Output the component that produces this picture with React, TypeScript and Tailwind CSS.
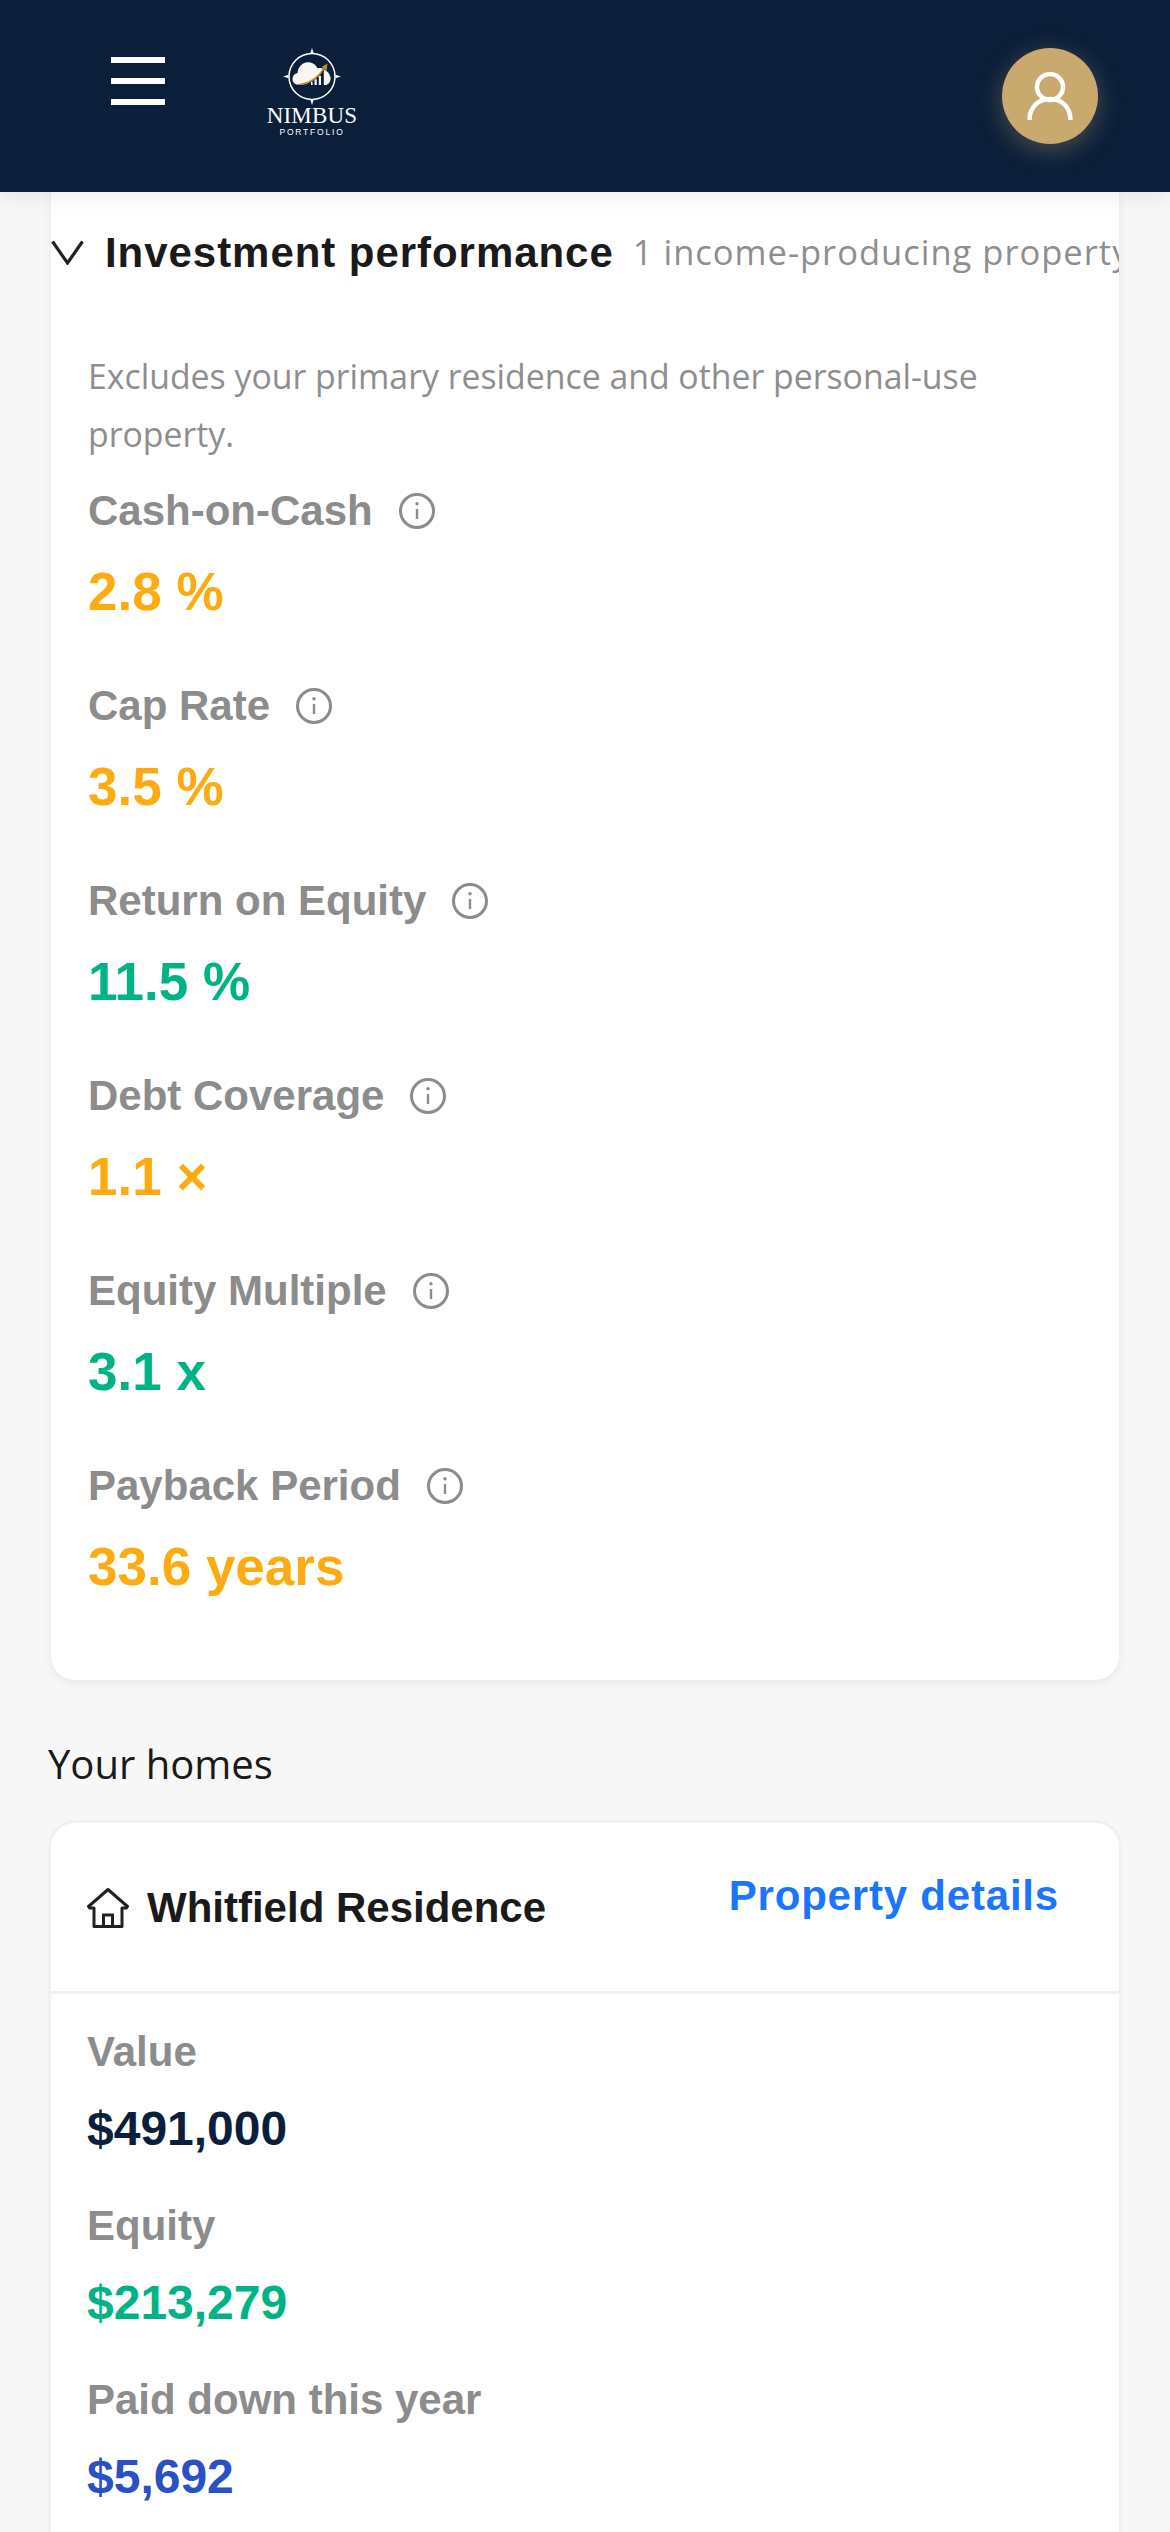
const sans = "font-['Liberation_Sans',Arial,sans-serif]";
const soft = "font-['Open_Sans',sans-serif]";

const metrics = [
  { label: "Cash-on-Cash", value: "2.8 %", color: "text-[#fdab10]" },
  { label: "Cap Rate", value: "3.5 %", color: "text-[#fdab10]" },
  { label: "Return on Equity", value: "11.5 %", color: "text-[#00b386]" },
  { label: "Debt Coverage", value: "1.1 ×", color: "text-[#fdab10]" },
  { label: "Equity Multiple", value: "3.1 x", color: "text-[#00b386]" },
  { label: "Payback Period", value: "33.6 years", color: "text-[#fdab10]" },
];

const homeStats = [
  { label: "Value", value: "$491,000", color: "text-[#0b1f3a]" },
  { label: "Equity", value: "$213,279", color: "text-[#00b386]" },
  { label: "Paid down this year", value: "$5,692", color: "text-[#2b4fc7]" },
];

function InfoIcon() {
  return (
    <svg width="36" height="36" viewBox="0 0 36 36" fill="none" stroke="#8c8c8c" strokeWidth="3" className="shrink-0">
      <circle cx="18" cy="18" r="16.5" />
      <path d="M18 16v10" strokeWidth="2.4" />
      <circle cx="18" cy="10.8" r="1.7" fill="#8c8c8c" stroke="none" />
    </svg>
  );
}

function Logo() {
  return (
    <div className="flex flex-col items-center w-[92px]">
      <svg width="58" height="58" viewBox="0 0 58 58" fill="none" className="block">
        <circle cx="29" cy="28.500" r="23" stroke="#fff" strokeWidth="1.500" />
        <path d="M29 0l1.800 5.500h-3.600zM29 57l1.800-5.500h-3.600zM0 28.500l5.500-1.800v3.600zM58 28.500l-5.500-1.800v3.600z" fill="#fff" />
        <path
          d="M14.500 36.500c-3 0-5-2.500-5-5.500 0-3 2-5.500 5-6 .5-6 5-10.700 10.500-10.700 4.500 0 8 2.500 9.500 6.200 2-.8 4.500-.5 6.500.7 4 2.300 6.500 5.500 6.500 9 0 3.500-2 6.300-5 6.300z"
          fill="#f7f6f1"
        />
        <path d="M20 37C30 34 36 28 41 20V37Z" fill="#0b1f3a" />
        <path d="M28 37v-3.300h1.600V37zM31.500 37v-5.700h2.300V37zM35.800 37v-9.300H38V37zM40.800 37V23.700h1.500c3 1.500 5 4 5 7 0 3-2 5.800-4.500 6.300z" fill="#f7f6f1" />
        <path d="M17.500 36.200C28 35 36 28.500 41.500 19.500" stroke="#c58a24" strokeWidth="1.500" fill="none" />
        <path d="M44.500 15.500l-.8 7-5-3.500z" fill="#c58a24" />
      </svg>
      <span className="font-['Liberation_Serif',serif] text-[23px] leading-[18px] text-white mt-[1px] tracking-[0.2px] whitespace-nowrap">
        NIMBUS
      </span>
      <span className="font-['Liberation_Sans',sans-serif] text-[8.500px] leading-[10px] text-white tracking-[1.800px] mt-[2px] whitespace-nowrap">
        PORTFOLIO
      </span>
    </div>
  );
}

function Header() {
  return (
    <header className="relative z-10 h-[192px] shrink-0 bg-[#0b1f3a] flex items-start pl-[111px] pr-[72px] shadow-[0_4px_20px_rgba(0,0,0,0.08)]">
      <div className="mt-[57px] w-[54px] flex flex-col gap-[15px]">
        <div className="h-[6px] bg-white" />
        <div className="h-[6px] bg-white" />
        <div className="h-[6px] bg-white" />
      </div>
      <div className="ml-[101px] mt-[48px]">
        <Logo />
      </div>
      <div className="ml-auto mt-[48px] w-[96px] h-[96px] rounded-full bg-[#c8a96e] flex items-center justify-center shadow-[0_6px_24px_rgba(200,169,110,0.35)]">
        <svg width="46" height="48" viewBox="0 0 46 48" fill="none" stroke="#fff" strokeWidth="4.500">
          <circle cx="23" cy="15" r="13" />
          <path d="M2.500 48c0-13 9-21 20.500-21s20.500 8 20.500 21" />
        </svg>
      </div>
    </header>
  );
}

function Metric({ label, value, color }: { label: string; value: string; color: string }) {
  return (
    <div className="h-[195px] shrink-0">
      <div className="flex items-center gap-[26px] h-[46px]">
        <span className={`text-[42px] leading-[46px] font-bold text-[#8c8c8c] ${sans}`}>{label}</span>
        <InfoIcon />
      </div>
      <div className={`mt-[28px] text-[53px] leading-[60px] font-bold ${sans} ${color}`}>{value}</div>
    </div>
  );
}

function HomeStat({ label, value, color }: { label: string; value: string; color: string }) {
  return (
    <div className="h-[174px] shrink-0">
      <div className={`text-[42px] leading-[46px] font-bold text-[#8c8c8c] ${sans}`}>{label}</div>
      <div className={`mt-[28px] text-[48px] leading-[52px] font-bold ${sans} ${color}`}>{value}</div>
    </div>
  );
}

export default function App() {
  return (
    <div className="h-[2532px] w-[1170px] overflow-hidden bg-[#f7f7f7] flex flex-col">
      <Header />
      <main className="px-[51px]">
        <section className="h-[1488px] bg-white rounded-b-[24px] shadow-[0_2px_8px_rgba(0,0,0,0.08)] overflow-hidden">
          <div className="flex items-center h-[76px] mt-[22px] whitespace-nowrap overflow-hidden">
            <svg width="33" height="25" viewBox="0 0 33 25" fill="none" stroke="#222" strokeWidth="3.200" className="shrink-0">
              <path d="M1.500 1.500L16.500 23 31.500 1.500" />
            </svg>
            <span className={`ml-[21px] text-[42px] font-bold tracking-[0.950px] text-[#1a1a1a] ${sans}`}>
              Investment performance
            </span>
            <span className={`ml-[19px] text-[34.500px] tracking-[1px] text-[#8e8e8e] ${soft}`}>
              1 income-producing property
            </span>
          </div>
          <div className="px-[37px]">
            <p className={`mt-[57px] w-[960px] text-[33.800px] leading-[58px] text-[#8e8e8e] ${soft}`}>
              Excludes your primary residence and other personal-use property.
            </p>
            <div className="mt-[25px] flex flex-col">
              {metrics.map((m) => (
                <Metric key={m.label} {...m} />
              ))}
            </div>
          </div>
        </section>
        <h2 className={`mt-[56px] -ml-[3px] text-[40px] leading-[56px] text-[#1a1a1a] ${soft}`}>Your homes</h2>
        <section className="mt-[31px] bg-white rounded-t-[24px] shadow-[0_0_0_3px_#f0f0f0]">
          <div className="h-[171px] flex items-start justify-between pl-[36px] pr-[60px] border-b-[3px] border-[#f0f0f0]">
            <div className="flex items-center gap-[18px] mt-[60px]">
              <svg width="42" height="40" viewBox="0 0 42 40" fill="none" stroke="#222" strokeWidth="3" className="shrink-0">
                <path d="M1.500 18.500L21 1.500l19.500 17-1 1.500H35v18.500H7V20H2.500z" strokeLinejoin="round" />
                <path d="M16.500 38.500V27h9v11.500" />
              </svg>
              <span className={`text-[42px] leading-[50px] font-bold text-[#1a1a1a] ${sans}`}>Whitfield Residence</span>
            </div>
            <a className={`mt-[48px] text-[42px] leading-[50px] font-bold tracking-[0.800px] text-[#1a76ff] ${sans}`}>
              Property details
            </a>
          </div>
          <div className="px-[36px] pt-[35px]">
            {homeStats.map((s) => (
              <HomeStat key={s.label} {...s} />
            ))}
          </div>
        </section>
      </main>
    </div>
  );
}
